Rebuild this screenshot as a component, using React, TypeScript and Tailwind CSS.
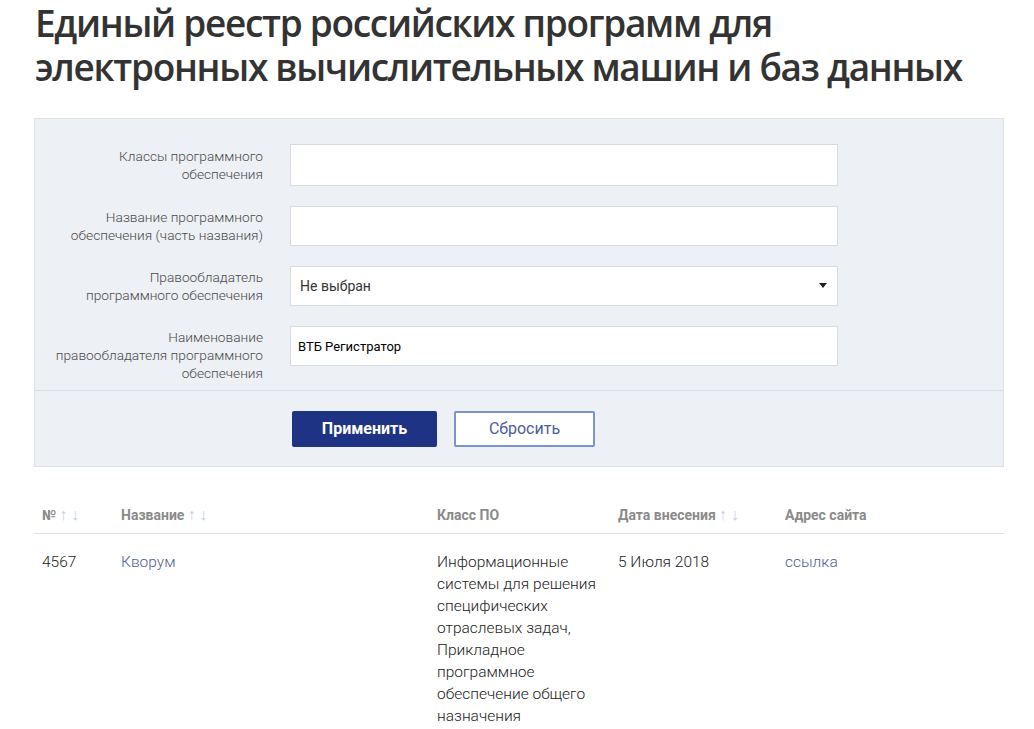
import { useState } from "react";

const fields = [
  { label: ["Классы программного", "обеспечения"], type: "text", value: "" },
  { label: ["Название программного", "обеспечения (часть названия)"], type: "text", value: "" },
  { label: ["Правообладатель", "программного обеспечения"], type: "select", value: "Не выбран" },
  { label: ["Наименование", "правообладателя программного", "обеспечения"], type: "text", value: "ВТБ Регистратор" },
];

function SortArrows() {
  return <span className="ml-[3px] text-[16px] font-light text-[#c6cdee]">↑ ↓</span>;
}

export default function App() {
  const [values, setValues] = useState(fields.map((f) => f.value));

  return (
    <div className="min-h-screen bg-white font-['Roboto',sans-serif] text-[#333]">
      <div className="w-[970px] ml-[34px]">
        <h1 className="pl-[1px] whitespace-nowrap text-[37px] leading-[44px] font-semibold text-[#333] font-['Open_Sans',sans-serif] tracking-[-1.3px]">
          <div className="pt-[1px]">Единый реестр российских программ для</div>
          <div>электронных вычислительных машин и баз данных</div>
        </h1>

        <div className="mt-[29px] border border-[#dde1e8] bg-[#edf0f5]">
          <div className="flex flex-col gap-5 pt-[25px] pb-[24px]">
            {fields.map((f, i) => (
              <div key={i} className={`flex items-start ${i === 0 ? "h-[42px]" : "h-10"}`}>
                <div className={`w-[228px] text-right text-[13.7px] leading-[18px] font-light text-[#4a4a4a] ${i === 0 ? "pt-[3px]" : "pt-[2px]"}`}>
                  {f.label.map((l, j) => (
                    <div key={j}>{l}</div>
                  ))}
                </div>
                <div className="ml-[27px] w-[548px] h-full relative">
                  {f.type === "select" ? (
                    <div className="h-full bg-white border border-[#d5dae3] flex items-center px-[9px] text-[14px] text-[#333]">
                      {values[i]}
                      <span className="absolute right-[11px] top-[17px] w-0 h-0 border-l-[4px] border-r-[4px] border-t-[5px] border-l-transparent border-r-transparent border-t-[#222]" />
                    </div>
                  ) : (
                    <input
                      className="w-full h-full bg-white border border-[#d5dae3] px-[7px] text-[13px] text-black outline-none"
                      value={values[i]}
                      onChange={(e) => {
                        const v = [...values];
                        v[i] = e.target.value;
                        setValues(v);
                      }}
                    />
                  )}
                </div>
              </div>
            ))}
          </div>
          <div className="border-t border-[#d9dde5] flex gap-[17px] pl-[257px] pt-5 pb-[19px]">
            <button className="w-[145px] h-9 bg-[#1f3384] rounded-[2px] text-white font-bold text-[16px]">
              Применить
            </button>
            <button className="w-[141px] h-9 bg-white border-2 border-[#7b93d1] rounded-[2px] text-[#4c5d9d] text-[16px]">
              Сбросить
            </button>
          </div>
        </div>

        <div className="mt-[38px]">
          <div className="grid grid-cols-[79px_316px_181px_167px_1fr] border-b border-[#dde1e8] pb-[8px] text-[14px] leading-5 font-bold text-[#8a8a8a]">
            <div className="pl-2">
              №<SortArrows />
            </div>
            <div className="pl-2">
              Название<SortArrows />
            </div>
            <div className="pl-2">Класс ПО</div>
            <div className="pl-2">
              Дата внесения<SortArrows />
            </div>
            <div className="pl-2">Адрес сайта</div>
          </div>
          <div className="grid grid-cols-[79px_316px_181px_167px_1fr] pt-[17px] text-[15.5px] leading-[22px] font-light text-[#222]">
            <div className="pl-2">4567</div>
            <div className="pl-2 text-[#4f5d96]">Кворум</div>
            <div className="pl-2">
              Информационные системы для решения специфических отраслевых задач, Прикладное программное обеспечение общего назначения
            </div>
            <div className="pl-2">5 Июля 2018</div>
            <div className="pl-2 text-[#4f5d96]">ссылка</div>
          </div>
        </div>
      </div>
    </div>
  );
}
